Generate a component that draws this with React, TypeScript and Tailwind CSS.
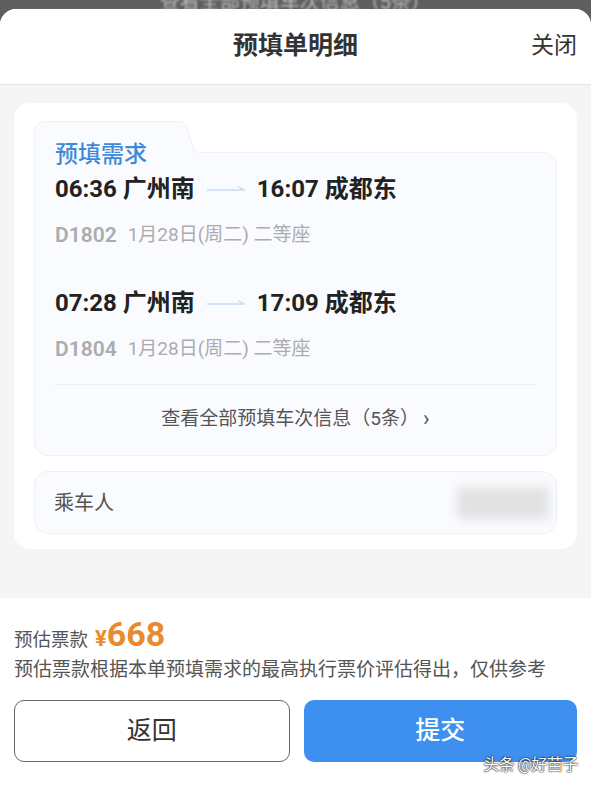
import React from 'react';

const trains = [
  { dep: '06:36', from: '广州南', arr: '16:07', to: '成都东', no: 'D1802', date: '1月28日(周二) 二等座' },
  { dep: '07:28', from: '广州南', arr: '17:09', to: '成都东', no: 'D1804', date: '1月28日(周二) 二等座' },
];

function Arrow() {
  return (
    <svg width="38" height="10" viewBox="0 0 38 10" className="mx-[12px] shrink-0">
      <path d="M0 6 H37 L31 2.5" fill="none" stroke="#c9ddf2" strokeWidth="1.4" />
    </svg>
  );
}

export default function App() {
  return (
    <div
      className="relative w-[591px] h-[785px] overflow-hidden bg-[#5f5f5f]"
      style={{ fontFamily: "Roboto, 'Noto Sans CJK SC', sans-serif" }}
    >
      {/* dimmed page behind the sheet */}
      <div className="h-[9px] overflow-hidden flex justify-center">
        <span className="-mt-[13px] text-[20px] text-[#bdbdbd] blur-[1px]">查看全部预填车次信息（5条）</span>
      </div>

      <div className="flex flex-col h-[776px] bg-[#f5f5f5] rounded-t-[16px] overflow-hidden">
        <header className="h-[76px] shrink-0 bg-white border-b border-[#e4e4e4] flex items-center justify-center relative">
          <h1 className="text-[25px] font-bold text-[#333] -mt-[2px]">预填单明细</h1>
          <button className="absolute right-[14px] top-[20px] text-[23px] text-[#333]">关闭</button>
        </header>

        <main className="flex-1 pt-[18px] pb-[49px] px-[14px]">
          <div className="bg-white rounded-[16px] px-[20px] pt-[49px] pb-[15px]">
            <div className="relative bg-[#f9fbfe] border border-[#edf1f6] rounded-[14px] rounded-tl-none px-[20px] pb-[23px]">
              <svg
                width="170"
                height="34"
                viewBox="0 0 170 34"
                className="absolute left-[-1px] top-[-32px]"
              >
                <path
                  d="M0.5 34 V12 Q0.5 0.5 12 0.5 H145 Q151 0.5 153 6 L159 26 Q161 31.5 167 31.5 H170 V34 Z"
                  fill="#f9fbfe"
                />
                <path
                  d="M0.5 34 V12 Q0.5 0.5 12 0.5 H145 Q151 0.5 153 6 L159 26 Q161 31.5 167 31.5 H170"
                  fill="none"
                  stroke="#edf1f6"
                  strokeWidth="1"
                />
              </svg>
              <h2 className="relative -mt-[12px] text-[23px] leading-[28px] text-[#3f8ad8] font-medium">预填需求</h2>

              {trains.map((t, i) => (
                <div key={t.no} className={i === 0 ? 'mt-[6px]' : 'mt-[41px]'}>
                  <div className="flex items-center text-[24px] leading-[28px] font-bold text-[#222]">
                    <span className="flex gap-[6px]">
                      <span>{t.dep}</span>
                      <span>{t.from}</span>
                    </span>
                    <Arrow />
                    <span className="flex gap-[6px]">
                      <span>{t.arr}</span>
                      <span>{t.to}</span>
                    </span>
                  </div>
                  <div className="mt-[19px] flex items-center leading-[26px] text-[#acacac]">
                    <span className="text-[21px] font-semibold">{t.no}</span>
                    <span className="ml-[11px] text-[19px]">{t.date}</span>
                  </div>
                </div>
              ))}

              <div className="mt-[22px] border-t border-[#eceef2]" />
              <button className="w-full mt-[21px] flex items-center justify-center text-[19px] leading-[26px] text-[#555]">
                查看全部预填车次信息（5条）
                <span className="ml-[4px] text-[22px] leading-[22px]">›</span>
              </button>
            </div>

            <div className="mt-[15px] h-[63px] bg-[#f9fbfe] border border-[#edf1f6] rounded-[14px] flex items-center justify-between pl-[19px] pr-[7px]">
              <span className="text-[20px] text-[#555]">乘车人</span>
              <div className="w-[92px] h-[32px] bg-[#e2e2e2] rounded-[4px] blur-[5px]" />
            </div>
          </div>
        </main>

        <footer className="h-[188px] shrink-0 bg-white px-[14px] pt-[16px]">
          <div className="flex items-baseline text-[#555]">
            <span className="text-[18.5px]">预估票款</span>
            <span className="ml-[7px] text-[22px] font-bold text-[#e98a2e]">¥</span>
            <span className="text-[34px] leading-[40px] font-bold text-[#e98a2e]">668</span>
          </div>
          <p className="text-[19px] leading-[28px] text-[#555] mt-[1px]">
            预估票款根据本单预填需求的最高执行票价评估得出，仅供参考
          </p>
          <div className="mt-[16px] flex gap-[14px]">
            <button className="flex-1 h-[62px] rounded-[10px] border-[1.5px] border-[#666] text-[25px] text-[#333]">
              返回
            </button>
            <button className="flex-1 h-[62px] rounded-[10px] bg-[#3d8ff0] text-[25px] text-white font-medium">
              提交
            </button>
          </div>
        </footer>
      </div>

      <span
        className="absolute right-[13px] bottom-[8px] text-[16px] tracking-[-0.5px] text-white"
        style={{ textShadow: '0 0 2px #000, 0 0 1px #000' }}
      >
        头条 @好苗子
      </span>
    </div>
  );
}
